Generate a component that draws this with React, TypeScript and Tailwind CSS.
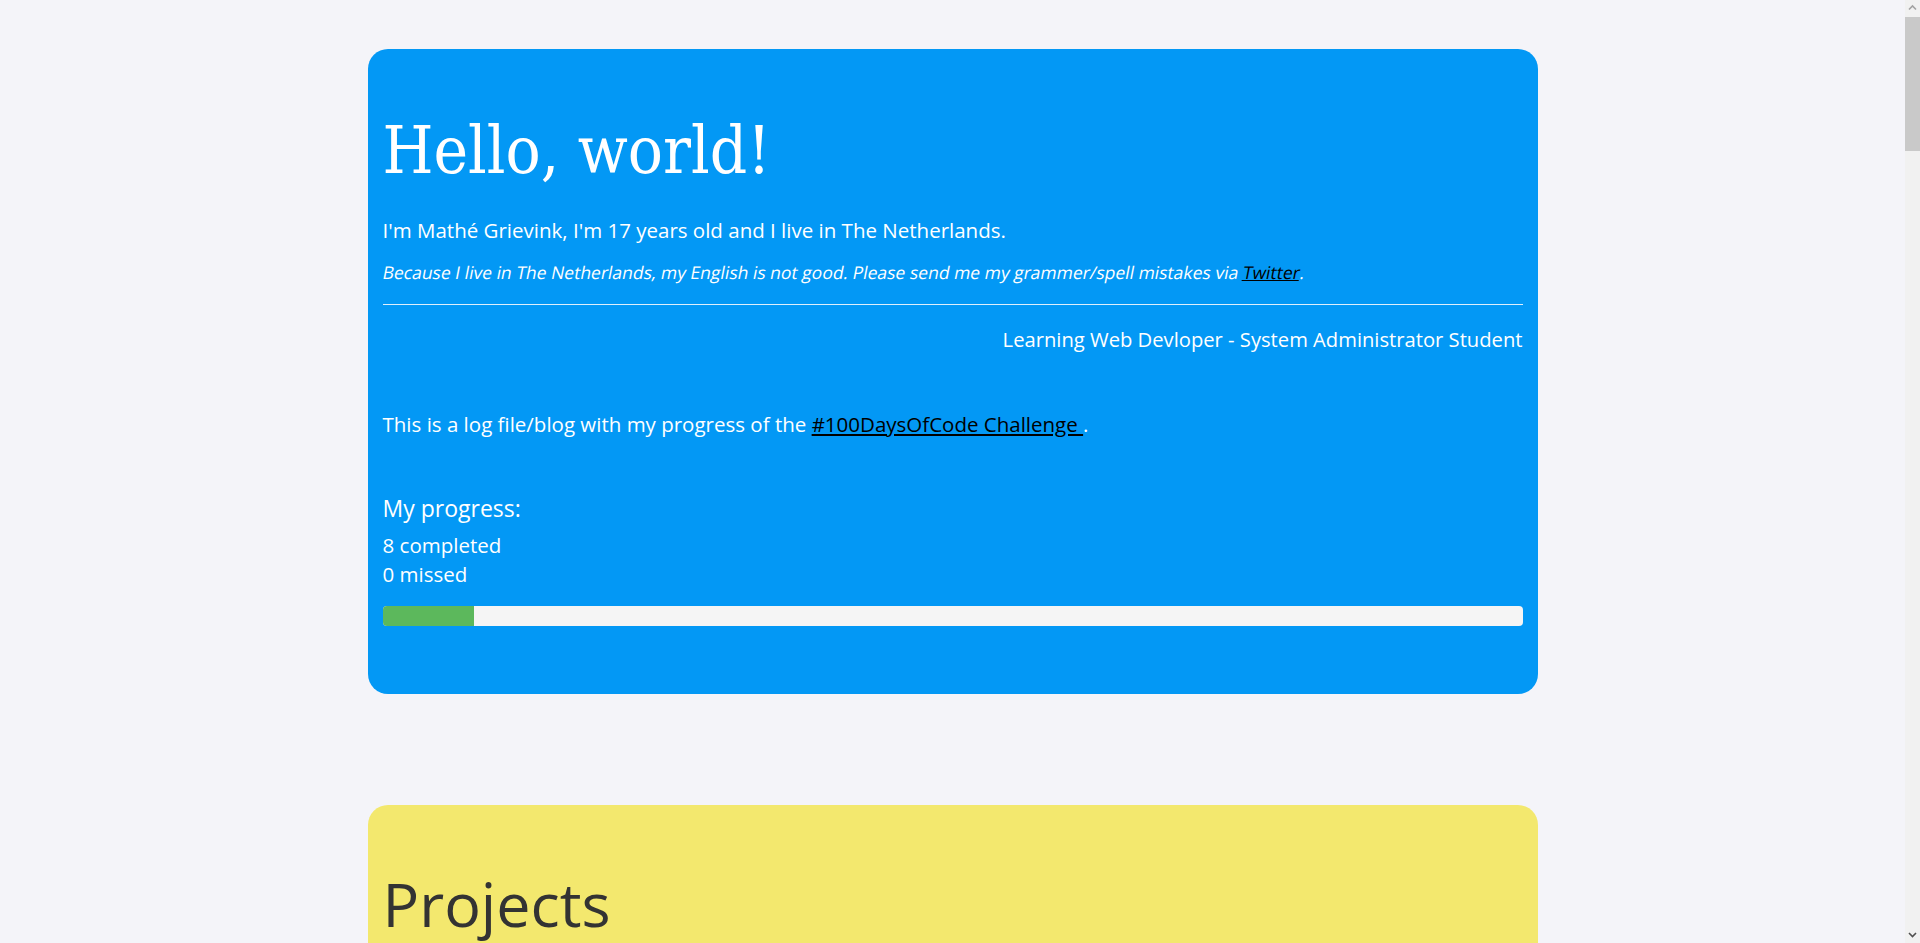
import React from 'react';

const days = [
  { day: 1, title: 'Day 1', text: 'Started the challenge.' },
  { day: 2, title: 'Day 2', text: 'Worked on my portfolio.' },
];

const Intro = () => {
  const completed = 8;
  const missed = 0;
  return (
    <section className="bg-[#0398f5] rounded-[20px] px-[15px] pt-[48px] pb-[48px] text-white">
      <h1 className="font-['DejaVu_Serif',serif] text-[65px] leading-[1.1] mt-[18px] mb-[28px] [font-stretch:semi-condensed]">
        Hello, world!
      </h1>
      <p className="text-[20.5px] leading-[30px] mb-[15px]">
        I'm Mathé Grievink, I'm 17 years old and I live in The Netherlands.
      </p>
      <p className="text-[17.5px] leading-[24px]">
        <span className="inline-block skew-x-[-11deg]">
          Because I live in The Netherlands, my English is not good. Please send me my grammer/spell mistakes via{' '}
          <a href="#" className="text-black underline">Twitter</a>.
        </span>
      </p>
      <hr className="my-[20px] border-t border-[#dfeffc]" />
      <p className="text-[20.2px] leading-[28px] text-right">
        Learning Web Devloper - System Administrator Student
      </p>

      <p className="text-[20.5px] leading-[28px] mt-[57px]">
        This is a log file/blog with my progress of the{' '}
        <a href="#" className="text-black underline">#100DaysOfCode Challenge </a>.
      </p>

      {/* Progress */}
      <h4 className="text-[23px] leading-[25px] mt-[58px] mb-[10px]">My progress:</h4>
      <div className="text-[20.5px] leading-[29.5px]">
        <div>{completed} completed</div>
        <div>{missed} missed</div>
      </div>
      <div className="h-[20px] mt-[16px] mb-[20px] rounded-[4px] bg-[#f5f5f5] overflow-hidden flex">
        <div className="h-full bg-[#5cb85c]" style={{ width: `${completed}%` }} />
      </div>
    </section>
  );
};

const Projects = () => (
  <section className="bg-[#f3e86e] rounded-[20px] px-[15px] pt-[48px] pb-[48px] text-[#333] mt-[111px] min-h-[5560px]">
    <h1 className="text-[61px] leading-[1.1] mt-[17px] mb-[30px]">Projects</h1>
    <div className="flex flex-col gap-6 text-[20.5px] leading-[28px]">
      {days.map((d) => (
        <div key={d.day}>
          <h3 className="text-[24px] mb-2">{d.title}</h3>
          <p>{d.text}</p>
        </div>
      ))}
    </div>
  </section>
);

// window scrollbar
const Scrollbar = () => (
  <div className="w-[15px] shrink-0 bg-[#f1f1f1] flex flex-col items-center">
    <svg width="15" height="17" viewBox="0 0 15 17" className="shrink-0">
      <path d="M4 9.5 L7.5 6 L11 9.5" fill="none" stroke="#a3a3a3" strokeWidth="1.6" />
    </svg>
    <div className="w-[15px] h-[134px] bg-[#c9c9c9]" />
    <div className="flex-1" />
    <svg width="15" height="17" viewBox="0 0 15 17" className="shrink-0">
      <path d="M4 7 L7.5 10.5 L11 7" fill="none" stroke="#505050" strokeWidth="1.6" />
    </svg>
  </div>
);

export default function App() {
  return (
    <div className="flex h-screen overflow-hidden bg-[#f4f4f9] font-['Open_Sans',sans-serif]">
      <main className="flex-1 overflow-y-auto">
        <div className="pt-[49px] pb-[80px]">
          <div className="w-[1170px] mx-auto">
            <Intro />
            <Projects />
          </div>
        </div>
      </main>
      <Scrollbar />
    </div>
  );
}
